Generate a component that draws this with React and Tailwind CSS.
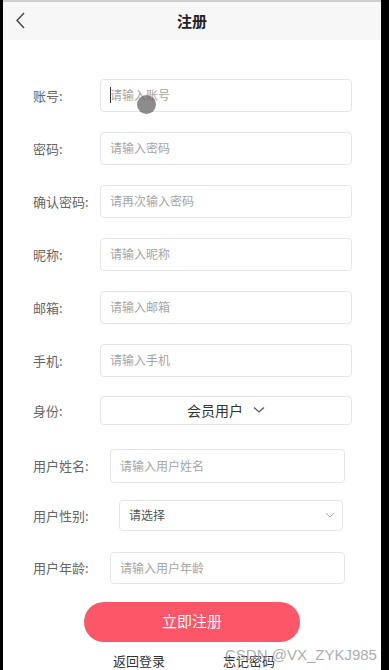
import React from "react";

const font = { fontFamily: '"Noto Sans CJK SC", "Noto Sans", sans-serif' };

function Row({ label, placeholder, labelW = "w-[67px]", inputW = "w-[252px]", h = "h-[33px]", mt, cursor }) {
  return (
    <div className={`flex items-center ${mt}`}>
      <div className={`${labelW} shrink-0 text-[13px] text-[#666]`}>{label}</div>
      <div className={`${inputW} ${h} relative flex items-center rounded-[4px] border border-[#e6e6e6] bg-white pl-[9px] text-[12px] text-[#a5a5a5]`}>
        {cursor && <span className="mr-[-1px] inline-block h-[16px] w-[1px] bg-[#333]" />}
        {placeholder}
      </div>
    </div>
  );
}

export default function App() {
  return (
    <div className="relative flex h-[670px] w-[389px] overflow-hidden bg-black pl-[3px] pr-[8px]" style={font}>
      <div className="flex w-[378px] flex-col bg-white">
        <div className="h-[2px] bg-[#cfcfcf]" />
        <div className="relative flex h-[39px] items-center justify-center bg-[#f7f7f7]">
          <svg className="absolute left-[11px] top-[9px]" width="14" height="19" viewBox="0 0 14 19" fill="none">
            <polyline points="10,2 3,9.5 10,17" stroke="#444" strokeWidth="1.4" />
          </svg>
          <span className="text-[15px] font-bold text-[#222]">注册</span>
        </div>

        <div className="flex flex-col pl-[30px]">
          <Row label="账号:" placeholder="请输入账号" mt="mt-[39px]" cursor />
          <Row label="密码:" placeholder="请输入密码" mt="mt-[20px]" />
          <Row label="确认密码:" placeholder="请再次输入密码" mt="mt-[20px]" />
          <Row label="昵称:" placeholder="请输入昵称" mt="mt-[20px]" />
          <Row label="邮箱:" placeholder="请输入邮箱" mt="mt-[20px]" />
          <Row label="手机:" placeholder="请输入手机" mt="mt-[20px]" />

          <div className="mt-[19px] flex items-center">
            <div className="w-[67px] shrink-0 text-[13px] text-[#666]">身份:</div>
            <div className="flex h-[29px] w-[252px] items-center justify-center rounded-[4px] border border-[#e6e6e6] text-[14px] text-[#333]">
              <span>会员用户</span>
              <svg className="ml-[10px]" width="12" height="8" viewBox="0 0 12 8" fill="none">
                <polyline points="1,1.5 6,6 11,1.5" stroke="#555" strokeWidth="1.3" />
              </svg>
            </div>
          </div>

          <Row label="用户姓名:" placeholder="请输入用户姓名" labelW="w-[77px]" inputW="w-[235px]" h="h-[34px]" mt="mt-[24px]" />

          <div className="mt-[17px] flex items-center">
            <div className="w-[86px] shrink-0 text-[13px] text-[#666]">用户性别:</div>
            <div className="flex h-[31px] w-[224px] items-center justify-between rounded-[4px] border border-[#e6e6e6] pl-[9px] pr-[7px] text-[12px] text-[#555]">
              <span>请选择</span>
              <svg width="10" height="6" viewBox="0 0 10 6" fill="none">
                <polyline points="1,1 5,5 9,1" stroke="#aaa" strokeWidth="1" />
              </svg>
            </div>
          </div>

          <Row label="用户年龄:" placeholder="请输入用户年龄" labelW="w-[77px]" inputW="w-[235px]" h="h-[32px]" mt="mt-[21px]" />
        </div>

        <div className="ml-[81px] mt-[18px] flex h-[41px] w-[216px] items-center justify-center rounded-full bg-[#fd5668] text-[15px] text-white">
          立即注册
        </div>

        <div className="mt-[9px] flex pl-[110px] text-[13px] text-[#333]">
          <span>返回登录</span>
          <span className="ml-[58px]">忘记密码</span>
        </div>
      </div>

      <div className="absolute left-[137px] top-[95px] h-[19px] w-[19px] rounded-full bg-[#6f6f6f] opacity-80" />
      <div
        className="absolute left-[225px] top-[644px] text-[15px] text-[#9a9a9a] opacity-80"
        style={{ fontFamily: '"Liberation Sans", Arial, sans-serif' }}
      >
        CSDN @VX_ZYKJ985
      </div>
    </div>
  );
}
